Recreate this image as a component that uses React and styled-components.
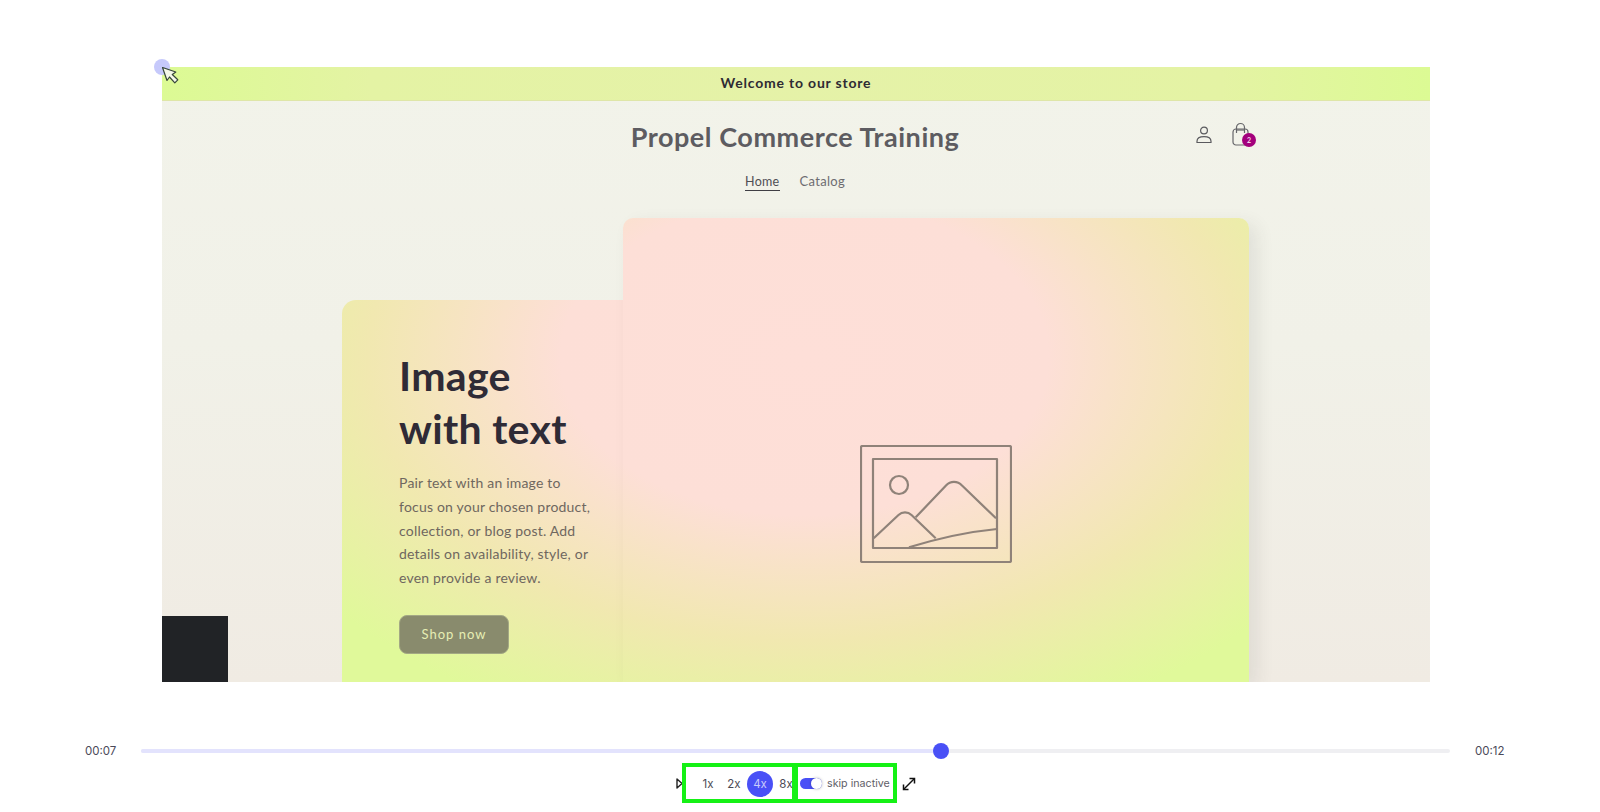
import React from 'react';
import styled, { createGlobalStyle } from 'styled-components';

const Global = createGlobalStyle`
  html, body { margin: 0; padding: 0; background: #fff; overflow: hidden; }
  * { box-sizing: border-box; }
  #root { width: 1600px; height: 812px; }
`;

const Page = styled.div`
  width: 1600px;
  height: 812px;
  padding-top: 67px;
  display: flex;
  flex-direction: column;
  font-family: "Lato", "Liberation Sans", sans-serif;
`;

const Stage = styled.div`
  position: relative;
  flex: none;
  width: 1268px;
  height: 615px;
  margin-left: 162px;
  background: linear-gradient(180deg, #f2f3ea 0%, #f1f1e8 45%, #f0ebe3 100%);
  display: flex;
  flex-direction: column;
`;

const Clip = styled.div`
  overflow: hidden;
  height: 615px;
  display: flex;
  flex-direction: column;
`;

const Banner = styled.div`
  flex: none;
  height: 34px;
  padding-bottom: 2px;
  display: flex;
  align-items: center;
  justify-content: center;
  border-bottom: 1px solid #dfe6a8;
  background: radial-gradient(ellipse 56% 700% at 50% 50%, #e5f2a8 0%, #e4f3a4 60%, #d9fd8e 100%);
  color: #2e2b33;
  font-size: 14px;
  font-weight: 700;
  letter-spacing: 0.8px;
`;

const Header = styled.header`
  flex: none;
  position: relative;
  height: 66px;
  padding: 5px 2px 0 0;
  display: flex;
  align-items: center;
  justify-content: center;
`;

const Title = styled.h1`
  margin: 0;
  font-size: 27px;
  font-weight: 700;
  letter-spacing: 0.55px;
  color: #5d5c61;
`;

const HeaderIcons = styled.div`
  position: absolute;
  left: 1032px;
  top: 21px;
  display: flex;
  gap: 18px;
  align-items: center;
`;

const CartWrap = styled.div`
  position: relative;
  width: 20px;
  height: 26px;
`;

const CartBadge = styled.span`
  position: absolute;
  left: 10px;
  top: 11px;
  width: 14px;
  height: 14px;
  border-radius: 50%;
  background: #a3007c;
  color: #f3d6e8;
  font-size: 7px;
  font-weight: 700;
  display: flex;
  align-items: center;
  justify-content: center;
`;

const Nav = styled.nav`
  flex: none;
  height: 51px;
  display: flex;
  justify-content: center;
  gap: 20px;
  padding-right: 2px;
`;

const NavLink = styled.a`
  height: 18px;
  margin-top: 6px;
  font-size: ${p => (p.$active ? '12.5px' : '13px')};
  line-height: 17px;
  letter-spacing: 0.3px;
  color: ${p => (p.$active ? '#4f4e54' : '#6d6c70')};
  border-bottom: ${p => (p.$active ? '1px solid #3f3e44' : '1px solid transparent')};
`;

const Hero = styled.section`
  flex: 1;
  display: flex;
  align-items: flex-end;
  padding-left: 180px;
`;

const gradient = `
  background-image: radial-gradient(ellipse 56% 71% at 51% 30%, #fedfd8 0%, #fddfd7 48%, #f1e8b0 86%, #e0f99a 120%);
  background-size: 907px 464px;
`;

const TextCard = styled.div`
  width: 281px;
  height: 382px;
  padding: 50px 0 0 57px;
  border-top-left-radius: 14px;
  ${gradient}
  background-position: left bottom;
`;

const Heading = styled.h2`
  margin: 0 0 16px;
  font-size: 41px;
  line-height: 52.5px;
  font-weight: 700;
  letter-spacing: 0.3px;
  color: #2f2b36;
`;

const Body = styled.p`
  margin: 0 0 25px;
  width: 193px;
  font-size: 14px;
  line-height: 23.8px;
  letter-spacing: 0.2px;
  color: #6f675f;
`;

const ShopButton = styled.button`
  width: 110px;
  height: 39px;
  border: 1px solid #a3a884;
  border-radius: 8px;
  background: #898b6d;
  color: #e6eeb4;
  font-family: inherit;
  font-size: 13px;
  letter-spacing: 1px;
  padding: 0;
`;

const ImageCard = styled.div`
  width: 626px;
  height: 464px;
  padding-top: 108px;
  display: flex;
  align-items: center;
  justify-content: center;
  border-radius: 10px 10px 0 0;
  box-shadow: 8px 6px 18px rgba(60, 60, 50, 0.09);
  ${gradient}
  background-position: right bottom;
`;

const Square = styled.div`
  position: absolute;
  left: 0;
  bottom: 0;
  width: 66px;
  height: 66px;
  background: #212326;
`;

const CursorDot = styled.div`
  position: absolute;
  left: -8px;
  top: -8px;
  width: 16px;
  height: 16px;
  border-radius: 50%;
  background: #c6c9fb;
`;

const CursorArrow = styled.svg`
  position: absolute;
  left: 0;
  top: 0;
  width: 18px;
  height: 18px;
`;

const TimeRow = styled.div`
  flex: none;
  margin-top: 59px;
  height: 20px;
  padding: 0 94px 0 85px;
  display: flex;
  align-items: center;
  gap: 25px;
  font-family: "Inter", "Liberation Sans", sans-serif;
  font-size: 11.5px;
  color: #4b4a59;
`;

const Time = styled.span`
  flex: none;
  width: 31px;
  white-space: nowrap;
`;

const Track = styled.div`
  position: relative;
  flex: 1;
  height: 4px;
  border-radius: 2px;
  background: #efeff2;
`;

const Progress = styled.div`
  height: 100%;
  border-radius: 2px;
  background: #e3e3fd;
`;

const Thumb = styled.div`
  position: absolute;
  top: -6px;
  width: 16px;
  height: 16px;
  margin-left: -8px;
  border-radius: 50%;
  background: #4950f6;
`;

const Controls = styled.div`
  flex: none;
  margin-top: 2px;
  height: 40px;
  display: flex;
  justify-content: center;
  align-items: center;
  padding-right: 8px;
  font-family: "Inter", "Liberation Sans", sans-serif;
  font-size: 11.5px;
  color: #4b4a55;
`;

const PlayIcon = styled.svg`
  flex: none;
  width: 7px;
  height: 11px;
  margin: 1px -1px 0 0;
`;

const SpeedBox = styled.div`
  flex: none;
  width: 114px;
  height: 40px;
  border: 4px solid #15f115;
  padding: 1px 0 0 9px;
  display: flex;
  align-items: center;
`;

const Speed = styled.span`
  flex: none;
  width: 26px;
  height: 26px;
  display: flex;
  align-items: center;
  justify-content: center;
  border-radius: 50%;
  color: ${p => (p.$active ? '#c9ccfb' : '#4b4a55')};
  background: ${p => (p.$active ? '#4950f6' : 'transparent')};
`;

const SkipBox = styled.div`
  position: relative;
  flex: none;
  width: 103px;
  height: 40px;
  margin-left: -2px;
  border: 4px solid #15f115;
  padding: 1px 0 0 2px;
  display: flex;
  align-items: center;
  gap: 5px;
`;

const Toggle = styled.div`
  position: relative;
  flex: none;
  width: 22px;
  height: 11px;
  border-radius: 6px;
  background: #4950f6;
`;

const Knob = styled.div`
  position: absolute;
  right: 0;
  top: 0;
  width: 11px;
  height: 11px;
  border-radius: 50%;
  background: #fff;
  box-shadow: 0 0 3px rgba(0, 0, 0, 0.3);
`;

const SkipLabel = styled.span`
  font-size: 10.7px;
  white-space: nowrap;
  color: #5f5e68;
`;

const ExpandIcon = styled.svg`
  flex: none;
  width: 14px;
  height: 14px;
  margin: 1px 0 0 5px;
`;

const UserIcon = () => (
  <svg width="20" height="20" viewBox="0 0 20 20" fill="none" stroke="#5a5a5e" strokeWidth="1.2">
    <circle cx="10" cy="5.5" r="3.4" />
    <path d="M3 17.5v-1.2c0-3 3-4.6 7-4.6s7 1.6 7 4.6v1.2z" />
  </svg>
);

const CartIcon = () => (
  <svg width="20" height="26" viewBox="0 0 20 26" fill="none" stroke="#66666a" strokeWidth="1.2">
    <rect x="1" y="7" width="15" height="16" rx="3" />
    <path d="M4.5 11V5.5a4 4 0 0 1 8 0V11" />
    <path d="M4 8h9" />
  </svg>
);

const PlaceholderIcon = () => (
  <svg width="152" height="118" viewBox="-1 -1 152 118" fill="none" stroke="#8f8279" strokeWidth="2.2" strokeLinejoin="round">
    <rect x="0" y="0" width="150" height="116" rx="1.5" />
    <rect x="12" y="13" width="124" height="89" />
    <circle cx="38" cy="39" r="9" />
    <path d="M54.7 71.3 85 39.5c4.5-4.8 11.5-4.8 16 0l34 32.8" />
    <path d="M12.7 92.3 37.5 69c3.6-3.4 9.4-3.4 13 0l24.2 23.3" />
    <path d="M48 101.3C75 93 105 86 136 83" />
  </svg>
);

export default function App() {
  return (
    <Page>
      <Global />
      <Stage>
        <Clip>
          <Banner>Welcome to our store</Banner>
          <Header>
            <Title>Propel Commerce Training</Title>
            <HeaderIcons>
              <UserIcon />
              <CartWrap>
                <CartIcon />
                <CartBadge>2</CartBadge>
              </CartWrap>
            </HeaderIcons>
          </Header>
          <Nav>
            <NavLink $active>Home</NavLink>
            <NavLink>Catalog</NavLink>
          </Nav>
          <Hero>
            <TextCard>
              <Heading>Image<br />with text</Heading>
              <Body>Pair text with an image to focus on your chosen product, collection, or blog post. Add details on availability, style, or even provide a review.</Body>
              <ShopButton>Shop now</ShopButton>
            </TextCard>
            <ImageCard>
              <PlaceholderIcon />
            </ImageCard>
          </Hero>
        </Clip>
        <Square />
        <CursorDot />
        <CursorArrow viewBox="0 0 18 18">
          <path d="M0.5 0.5 5 13.5 7.5 10 12.8 15.8 15.8 12.8 10.3 7.5 13.8 5Z" fill="#f4f8e8" stroke="#37473a" strokeWidth="1.2" strokeLinejoin="round" />
        </CursorArrow>
      </Stage>
      <TimeRow>
        <Time>00:07</Time>
        <Track>
          <Progress style={{ width: `${(800 / 1309) * 100}%` }} />
          <Thumb style={{ left: `${(800 / 1309) * 100}%` }} />
        </Track>
        <Time>00:12</Time>
      </TimeRow>
      <Controls>
        <PlayIcon viewBox="0 0 7 11">
          <path d="M1 1 6 5.5 1 10Z" fill="none" stroke="#222" strokeWidth="1.4" strokeLinejoin="round" />
        </PlayIcon>
        <SpeedBox>
          <Speed>1x</Speed>
          <Speed>2x</Speed>
          <Speed $active>4x</Speed>
          <Speed>8x</Speed>
        </SpeedBox>
        <SkipBox>
          <Toggle><Knob /></Toggle>
          <SkipLabel>skip inactive</SkipLabel>
        </SkipBox>
        <ExpandIcon viewBox="0 0 14 14" fill="none" stroke="#111" strokeWidth="1.5">
          <path d="M2 12 12 2" />
          <path d="M7.5 1.5h5v5" />
          <path d="M1.5 7.5v5h5" />
        </ExpandIcon>
      </Controls>
    </Page>
  );
}
